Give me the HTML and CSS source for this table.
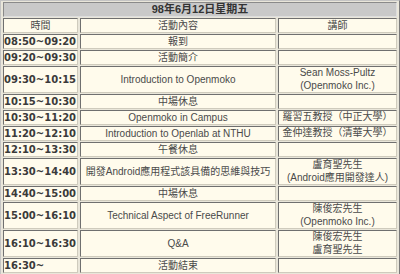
FILE: index.html
```html
<!DOCTYPE html>
<html lang="zh-Hant">
<head>
<meta charset="utf-8">
<title>98年6月12日星期五</title>
<link rel="stylesheet" href="styles.css">
</head>
<body>
<table class="schedule">
  <tr><th class="title" colspan="3">98年6月12日星期五</th></tr>
  <tr class="head"><td>時間</td><td>活動內容</td><td>講師</td></tr>
  <tr><td class="time">08:50~09:20</td><td class="act">報到</td><td class="who"></td></tr>
  <tr><td class="time">09:20~09:30</td><td class="act">活動簡介</td><td class="who"></td></tr>
  <tr><td class="time">09:30~10:15</td><td class="act">Introduction to Openmoko</td><td class="who">Sean Moss-Pultz<br>(Openmoko Inc.)</td></tr>
  <tr><td class="time">10:15~10:30</td><td class="act">中場休息</td><td class="who"></td></tr>
  <tr><td class="time">10:30~11:20</td><td class="act">Openmoko in Campus</td><td class="who">羅習五教授（中正大學）</td></tr>
  <tr><td class="time">11:20~12:10</td><td class="act">Introduction to Openlab at NTHU</td><td class="who">金仲達教授（清華大學）</td></tr>
  <tr><td class="time">12:10~13:30</td><td class="act">午餐休息</td><td class="who"></td></tr>
  <tr><td class="time">13:30~14:40</td><td class="act">開發Android應用程式該具備的思維與技巧</td><td class="who">盧育聖先生<br>(Android應用開發達人)</td></tr>
  <tr><td class="time">14:40~15:00</td><td class="act">中場休息</td><td class="who"></td></tr>
  <tr><td class="time">15:00~16:10</td><td class="act">Technical Aspect of FreeRunner</td><td class="who">陳俊宏先生<br>(Openmoko Inc.)</td></tr>
  <tr><td class="time">16:10~16:30</td><td class="act">Q&amp;A</td><td class="who">陳俊宏先生<br>盧育聖先生</td></tr>
  <tr><td class="time">16:30~</td><td class="act">活動結束</td><td class="who"></td></tr>
</table>
</body>
</html>
```
FILE: styles.css
```css
html, body {
  margin: 0;
  padding: 0;
  background: #a9a9a9;
}
.schedule {
  width: 400px;
  border-collapse: separate;
  border-spacing: 2px 1px;
  border: 1px solid;
  border-color: #c4c4c4 #7a7a7a #7a7a7a #c4c4c4;
  background: #e9e6da;
  font-family: "Liberation Sans", "Noto Sans CJK TC", sans-serif;
  font-size: 10px;
  color: #4a4a4a;
}
.schedule td, .schedule th {
  padding: 0;
  line-height: 13px;
  border: 1px solid;
  border-color: #6f6f6f #cfcbbd #cfcbbd #6f6f6f;
  background: #fffbec;
  text-align: center;
  vertical-align: middle;
}
.schedule .title {
  background: #c9c9c9;
  border-color: #8a8a8a #dddddd #dddddd #8a8a8a;
  font-size: 11px;
  font-weight: bold;
  color: #333;
}
.head td {
  color: #4a4a4a;
}
.schedule .time {
  width: 73px;
  text-align: left;
  font-family: "DejaVu Sans", sans-serif;
  font-size: 10px;
  font-weight: 600;
  color: #3a3a3a;
}
.schedule .act {
  width: 194px;
}
.schedule .who {
  line-height: 12.5px;
}
```
